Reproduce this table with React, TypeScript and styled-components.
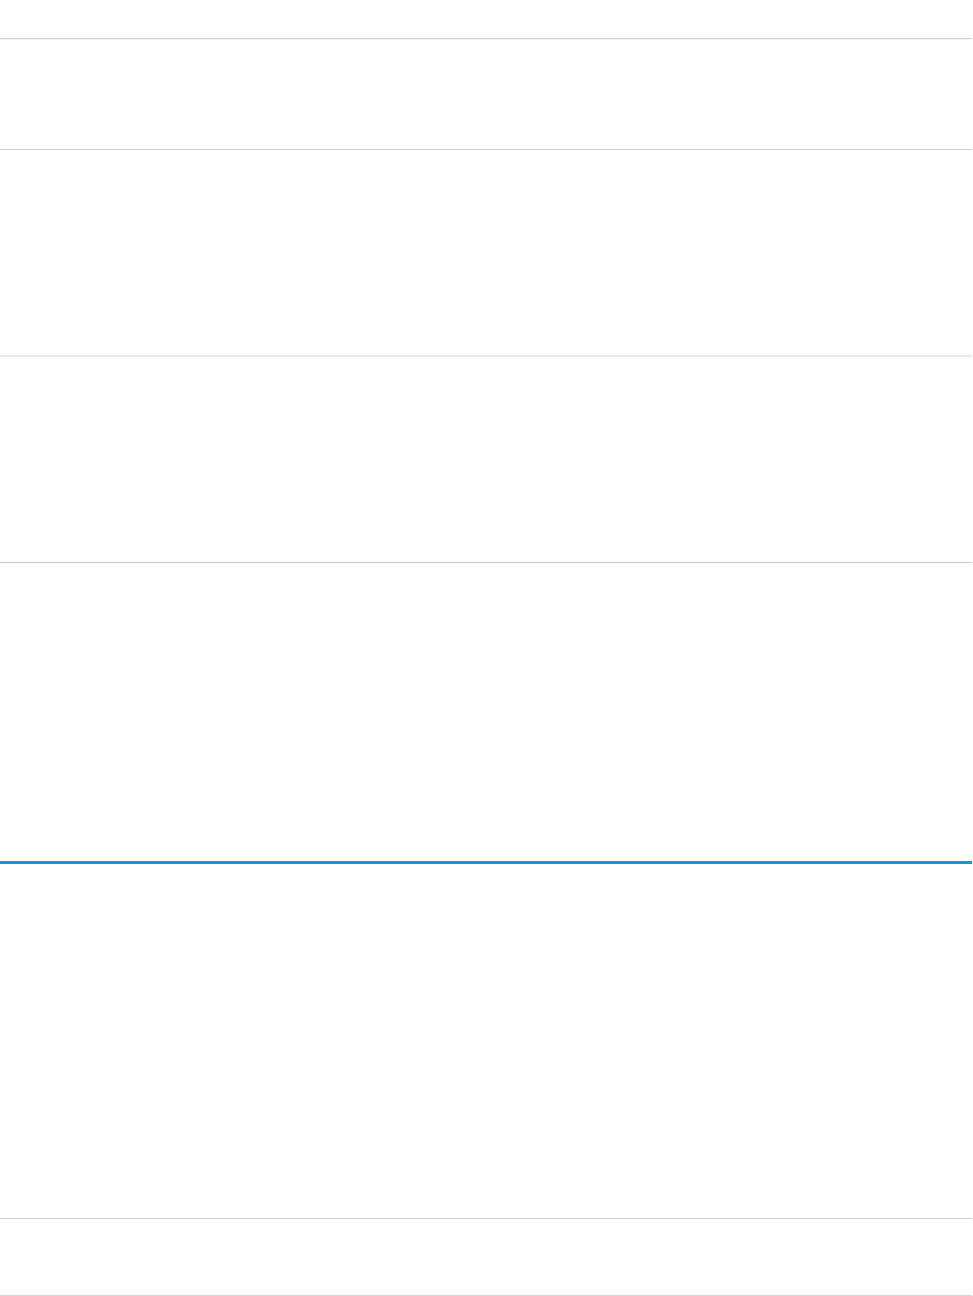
import React from 'react'
import styled, { createGlobalStyle } from 'styled-components'

const GlobalStyle = createGlobalStyle`
  html, body {
    margin: 0;
    padding: 0;
    background: #ffffff;
    font-family: "Liberation Sans", Arial, sans-serif;
  }
`

const Page = styled.div`
  width: 972px;
  display: flex;
  flex-direction: column;
`

const Section = styled.section<{ $h: number; $line: string; $weight?: number; $glow?: string }>`
  height: ${p => p.$h}px;
  border-bottom: ${p => p.$weight || 1}px solid ${p => p.$line};
  box-shadow: ${p => (p.$glow ? `0 1px 0 ${p.$glow}` : 'none')};
`

const rows = [
  { h: 38, line: '#c8d6de', glow: '#edf3f6' },
  { h: 110, line: '#cdd5d7' },
  { h: 205, line: '#e4ecf2', weight: 2 },
  { h: 205, line: '#bccad4' },
  { h: 298, line: '#0b9ad9', weight: 3 },
  { h: 354, line: '#cbd6dc' },
  { h: 76, line: '#ccdadf' },
]

export default function App() {
  return (
    <>
      <GlobalStyle />
      <Page>
        {rows.map((r, i) => (
          <Section key={i} $h={r.h} $line={r.line} $weight={r.weight} $glow={r.glow} />
        ))}
      </Page>
    </>
  )
}
